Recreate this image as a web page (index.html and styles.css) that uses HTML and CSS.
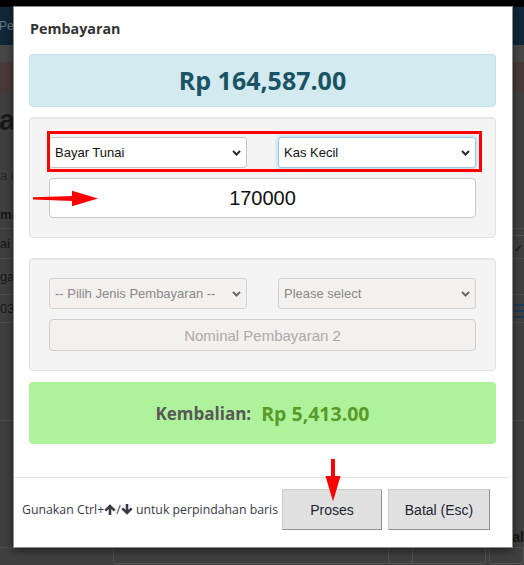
FILE: index.html
```html
<!DOCTYPE html>
<html lang="id">
<head>
    <meta charset="UTF-8">
    <meta name="viewport" content="width=device-width, initial-scale=1.0">
    <title>Pembayaran</title>
    <link rel="stylesheet" href="styles.css">
</head>
<body>
    <!-- dimmed page behind the dialog -->
    <div class="page">
        <div class="page-top"></div>
        <div class="page-nav"><span class="nav-link">Pem</span></div>
        <div class="page-grey"></div>
        <div class="page-brown"></div>
        <div class="page-row row-title"><span class="page-heading">al</span></div>
        <div class="page-row row-note"><span>a n</span></div>
        <div class="page-row row-head"><b>mi</b></div>
        <div class="page-row row-a"><span>ai</span><span class="check-cell">&#10003;</span></div>
        <div class="page-row row-b"><span>ga</span></div>
        <div class="page-row row-c"><span>03</span><span class="stripes"></span></div>
        <div class="page-row row-d"></div>
        <div class="page-row row-e"><span></span><b class="tail-text">al</b></div>
        <div class="page-tabs">
            <span class="tab tab-left"></span>
            <span class="tab tab-mid"></span>
            <span class="tab tab-right"></span>
        </div>
    </div>

    <div class="modal">
        <div class="modal-header">
            <h4 class="modal-title">Pembayaran</h4>
        </div>
        <div class="modal-body">
            <div class="total-box">Rp 164,587.00</div>

            <div class="well">
                <div class="pay-row">
                    <div class="select-wrap">
                        <select class="field"><option>Bayar Tunai</option></select>
                        <svg class="chevron" width="9" height="6" viewBox="0 0 9 6"><path d="M1 1l3.5 3.5L8 1"/></svg>
                    </div>
                    <div class="select-wrap">
                        <select class="field field-focus"><option>Kas Kecil</option></select>
                        <svg class="chevron" width="9" height="6" viewBox="0 0 9 6"><path d="M1 1l3.5 3.5L8 1"/></svg>
                    </div>
                </div>
                <input class="amount" type="text" value="170000">
            </div>

            <div class="well">
                <div class="pay-row">
                    <div class="select-wrap">
                        <select class="field" disabled><option>-- Pilih Jenis Pembayaran --</option></select>
                        <svg class="chevron chevron-off" width="9" height="6" viewBox="0 0 9 6"><path d="M1 1l3.5 3.5L8 1"/></svg>
                    </div>
                    <div class="select-wrap">
                        <select class="field" disabled><option>Please select</option></select>
                        <svg class="chevron chevron-off" width="9" height="6" viewBox="0 0 9 6"><path d="M1 1l3.5 3.5L8 1"/></svg>
                    </div>
                </div>
                <input class="amount amount-off" type="text" placeholder="Nominal Pembayaran 2" disabled>
            </div>

            <div class="change-box">
                <span class="change-label">Kembalian:</span>
                <span class="change-value">Rp 5,413.00</span>
            </div>
        </div>
        <div class="modal-footer">
            <span class="hint">Gunakan Ctrl+<svg class="key-arrow" width="12" height="11" viewBox="0 0 12 11"><path d="M6 .3l5.6 5.5-1.8 1.8-2.5-2.5V11H4.7V5.1L2.2 7.6.4 5.8z"/></svg>/<svg class="key-arrow" width="12" height="11" viewBox="0 0 12 11"><path d="M6 10.7l5.6-5.5-1.8-1.8-2.5 2.5V0H4.7v5.9L2.2 3.4.4 5.2z"/></svg> untuk perpindahan baris</span>
            <button class="btn">Proses</button>
            <button class="btn btn-wide">Batal (Esc)</button>
        </div>
    </div>

    <!-- red annotations drawn over the screenshot -->
    <div class="mark-box"></div>
    <svg class="mark arrow-right" width="66" height="17" viewBox="0 0 66 17">
        <path d="M0 7.2L40 6v5L0 9.6z"/>
        <path d="M39 .8L65 8.5 39 16.2z"/>
    </svg>
    <svg class="mark arrow-down" width="16" height="43" viewBox="0 0 16 43">
        <path d="M6 0h4v18H6z"/>
        <path d="M.5 17h15L8 42.5z"/>
    </svg>
</body>
</html>
```

FILE: styles.css
```css
body {
    margin: 0;
    width: 524px;
    height: 565px;
    overflow: hidden;
    position: relative;
    background: #404040;
    font-family: "Open Sans", sans-serif;
}

/* ---------- page behind the overlay ---------- */

.page {
    display: flex;
    flex-direction: column;
    color: #161616;
    font-family: "Liberation Sans", sans-serif;
    font-size: 13px;
}

.page-top {
    height: 7px;
    background: #000;
}

.page-nav {
    height: 38px;
    background: #0f2739;
    display: flex;
    align-items: center;
}

.nav-link {
    color: #687987;
    font-size: 12px;
    margin-left: -1px;
}

.page-grey {
    height: 17px;
    background: #474747;
}

.page-brown {
    height: 30px;
    background: #4a3a37;
}

.page-row {
    display: flex;
    justify-content: space-between;
    align-items: center;
    border-bottom: 1px solid #4d4d4d;
}

.row-title {
    height: 58px;
    border-bottom: none;
    align-items: flex-start;
}

.page-heading {
    font-size: 29px;
    font-weight: bold;
    margin: 12px 0 0 -1px;
    color: #1a1a1a;
}

.row-note {
    height: 50px;
    border-bottom: none;
    color: #262626;
}

.row-head {
    height: 28px;
}

.row-a {
    height: 29px;
}

.check-cell {
    align-self: flex-end;
    width: 10px;
    height: 22px;
    border-top: 1px solid #555;
    border-left: 1px solid #555;
    font-size: 11px;
    line-height: 24px;
    padding-left: 1px;
}

.row-b {
    height: 35px;
}

.row-c {
    height: 27px;
}

.stripes {
    width: 10px;
    height: 17px;
    margin-top: 8px;
    background: repeating-linear-gradient(#1e3a56 0 2px, transparent 2px 6px);
}

.row-d {
    height: 97px;
}

.row-e {
    height: 126px;
    border-bottom: none;
    align-items: flex-end;
}

.tail-text {
    font-size: 14px;
    margin-bottom: 2px;
}

.page-tabs {
    height: 18px;
    display: flex;
    border-top: 1px solid #4f4f4f;
}

.tab {
    border: 1px solid #555;
    border-top: none;
    border-radius: 0 0 4px 4px;
    height: 15px;
}

.tab-left {
    width: 298px;
    margin-left: 113px;
}

.tab-mid {
    width: 96px;
    margin-left: -25px;
}

.tab-right {
    flex: 1;
    margin-left: 3px;
}

/* ---------- dialog ---------- */

.modal {
    position: absolute;
    left: 13px;
    top: 6px;
    width: 498px;
    background: #fff;
    border: 1px solid #8c8c8c;
    box-shadow: 0 3px 9px rgba(0, 0, 0, 0.5);
}

.modal-header {
    padding: 12px 16px 15px;
}

.modal-title {
    margin: 0;
    font-size: 14.3px;
    line-height: 20px;
    font-weight: 700;
    color: #333;
}

.modal-body {
    padding: 0 16px 0 15px;
}

.total-box {
    height: 51px;
    line-height: 51px;
    margin-bottom: 10px;
    background: #d2eaf0;
    border: 1px solid #bfe2ea;
    border-radius: 4px;
    text-align: center;
    font-size: 25px;
    font-weight: 700;
    color: #1a5363;
}

.well {
    padding: 19px;
    margin-bottom: 20px;
    background: #f4f4f4;
    border: 1px solid #e3e3e3;
    border-radius: 4px;
    box-shadow: inset 0 1px 1px rgba(0, 0, 0, 0.05);
}

.well + .well {
    margin-bottom: 11px;
}

.pay-row {
    display: grid;
    grid-template-columns: 198px 198px;
    justify-content: space-between;
    margin-bottom: 10px;
}

.select-wrap {
    position: relative;
}

.field {
    appearance: none;
    display: block;
    width: 100%;
    height: 31px;
    padding: 0 20px 0 5px;
    background: #fff;
    border: 1px solid #c6c6c6;
    border-radius: 3px;
    font-family: "Liberation Sans", sans-serif;
    font-size: 13px;
    color: #111;
    outline: none;
}

.field-focus {
    border-color: #9cc8ea;
    box-shadow: 0 0 5px rgba(102, 175, 233, 0.6);
}

.field:disabled {
    background: #f3f0ee;
    border-color: #d3d3d3;
    color: #8a8a8a;
    opacity: 1;
}

.chevron {
    position: absolute;
    right: 6px;
    top: 13px;
    fill: none;
    stroke: #2b2b2b;
    stroke-width: 2;
}

.chevron-off {
    stroke: #6a6a6a;
}

.amount {
    display: block;
    box-sizing: border-box;
    width: 100%;
    height: 40px;
    padding: 0 12px;
    background: #fff;
    border: 1px solid #c9c9c9;
    border-radius: 4px;
    font-family: "Liberation Sans", sans-serif;
    font-size: 20px;
    color: #111;
    text-align: center;
    outline: none;
}

.amount-off {
    height: 32px;
    background: #f3f0ee;
    border-color: #cfcfcf;
    font-size: 15px;
}

.amount-off::placeholder {
    color: #ababab;
}

.change-box {
    height: 62px;
    margin-bottom: 33px;
    background: #aef39b;
    border-radius: 4px;
    display: flex;
    justify-content: center;
    align-items: center;
    gap: 10px;
    font-weight: 700;
}

.change-label {
    font-size: 17px;
    color: #585858;
}

.change-value {
    font-size: 19.5px;
    color: #5a9a28;
}

.modal-footer {
    display: flex;
    align-items: center;
    gap: 6px;
    padding: 11px 19px 17px 7px;
    margin: 0 3px 0 1px;
    border-top: 1px solid #e2e2e2;
}

.hint {
    flex: 1;
    min-width: 0;
    font-size: 12.3px;
    color: #3a3a46;
    white-space: nowrap;
}

.key-arrow {
    fill: #3a3a46;
    vertical-align: -1px;
}

.btn {
    flex-shrink: 0;
    width: 100px;
    height: 41px;
    background: #e1e1e1;
    border: 1px solid #cbcbcb;
    border-right-color: #8f8f8f;
    border-bottom-color: #8f8f8f;
    border-radius: 1px;
    font-family: "Liberation Sans", sans-serif;
    font-size: 14px;
    color: #1c2530;
}

.btn-wide {
    width: 102px;
}

/* ---------- red annotations ---------- */

.mark-box {
    position: absolute;
    left: 47px;
    top: 131px;
    width: 429px;
    height: 35px;
    border: 3px solid #f00;
}

.mark {
    position: absolute;
    fill: #f00;
}

.arrow-right {
    left: 33px;
    top: 190px;
}

.arrow-down {
    left: 325px;
    top: 459px;
}
```
